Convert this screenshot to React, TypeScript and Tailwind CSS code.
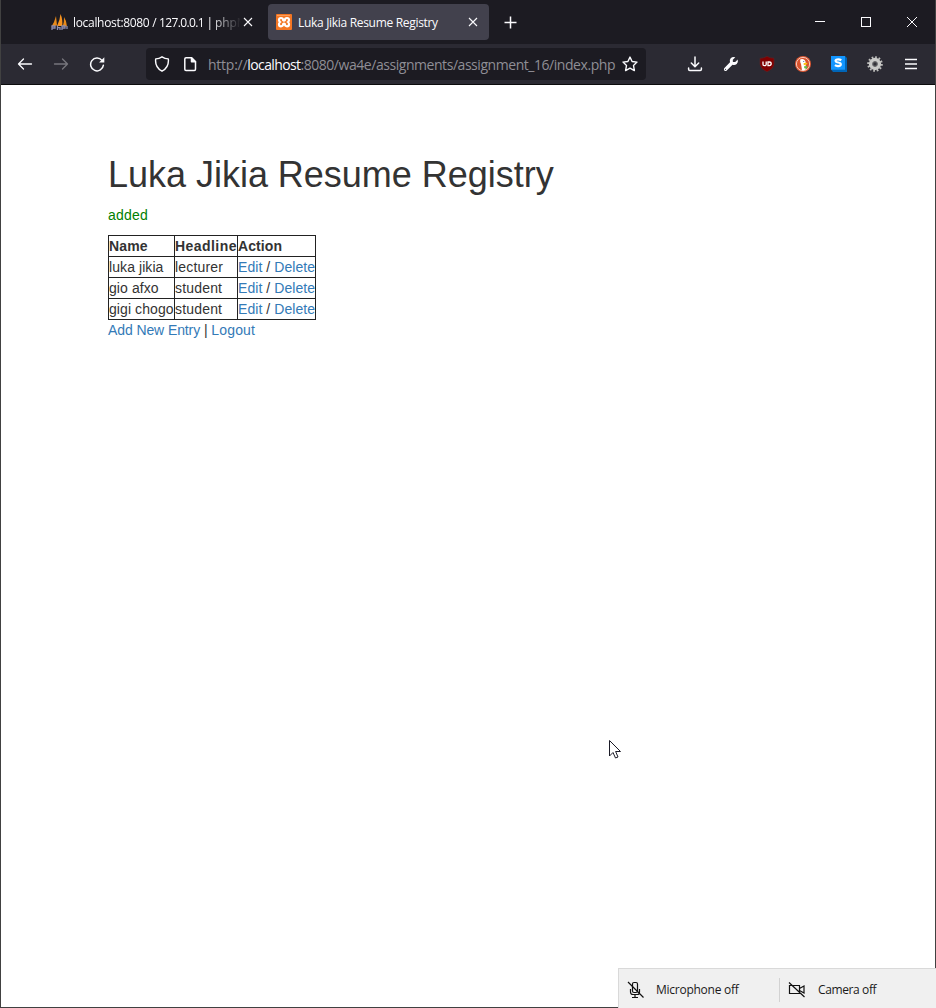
import React from "react";

const UI = "font-['Open_Sans','Noto_Sans',sans-serif]";

function Tab1Icon() {
  return (
    <svg width="18" height="18" viewBox="0 0 18 18" className="-ml-px mr-px shrink-0">
      <path d="M6 3 L7 12.500 L1.500 13.500 Q4.500 9 6 3Z" fill="#e88a1a" />
      <path d="M10.500 1 Q12.800 6 12.300 13 L7 13 Q10 7 10.500 1Z" fill="#f79420" />
      <path d="M14 4 Q16.800 8 17 13.500 L12.700 13.500 Q14.300 9 14 4Z" fill="#e88a1a" />
      <path d="M2 17V13H5V15H2M7.500 12.500V17M7.500 14.700H10V17M12 17V13H15V15H12M17 13V16" fill="none" stroke="#8a8cb0" strokeWidth="1.300" />
    </svg>
  );
}

function XamppIcon() {
  return (
    <svg width="16" height="16" viewBox="0 0 16 16" className="shrink-0">
      <rect width="16" height="16" rx="1" fill="#f37623" />
      <path d="M1 1.500H14" stroke="#ffa768" strokeWidth="0.800" />
      <path d="M5 4Q7 4 7.200 6.300Q8 7.200 8.800 6.300Q9 4 11 4Q13 4 13 6Q13 7.200 12 8Q13 8.800 13 10.200Q13 12.300 11 12.300Q9 12.300 8.800 10Q8 9 7.200 10Q7 12.300 5 12.300Q3 12.300 3 10.200Q3 8.800 4 8Q3 7.200 3 6Q3 4 5 4Z" fill="none" stroke="#fff" strokeWidth="2.200" />
    </svg>
  );
}

function Cross({ size, className }: { size: number; className?: string }) {
  return (
    <svg width={size} height={size} viewBox="0 0 10 10" className={className} fill="none" stroke="currentColor">
      <path d="M1 1L9 9M9 1L1 9" strokeWidth="1.100" />
    </svg>
  );
}

function Line({ d, className, width = "1.500" }: { d: string; className?: string; width?: string }) {
  return (
    <svg width="16" height="16" viewBox="0 0 16 16" className={className} fill="none" stroke="currentColor" strokeWidth={width} strokeLinecap="round" strokeLinejoin="round">
      <path d={d} />
    </svg>
  );
}

function TabStrip() {
  return (
    <div className="flex h-[44px] bg-[#1c1b22] pt-1">
      <div className="flex h-9 w-[217px] ml-[42px] items-center pl-2 pr-[7px]">
        <Tab1Icon />
        <div className="ml-1 mt-[2px] w-[169px] shrink-0 whitespace-nowrap text-[12px] tracking-[-0.32px] [mask-image:linear-gradient(to_right,black_138px,transparent_168px)]">
          localhost:8080 / <span className="tracking-[-0.62px]">127.0.0.1 </span><span className="tracking-[-0.7px]">| </span><span className="tracking-[-0.1px]">phpM</span>
        </div>
        <Cross size={10} className="ml-px shrink-0" />
      </div>
      <div className="ml-[8px] flex h-9 w-[221px] items-center rounded bg-[#42414d] pl-2 pr-[11px]">
        <XamppIcon />
        <span className="ml-1.5 mt-[2px] grow whitespace-nowrap text-[12px] tracking-[-0.31px]">Luka Jikia Resume Registry</span>
        <Cross size={10} />
      </div>
      <div className="ml-[15px] flex h-9 items-center">
        <svg width="13" height="13" viewBox="0 0 13 13" stroke="currentColor" strokeWidth="1.500" fill="none">
          <path d="M6.500 .5V12.500M.5 6.500H12.500" />
        </svg>
      </div>
      <div className="ml-auto flex h-9 items-center gap-[34px] pr-[17px]">
        <svg width="12" height="12" viewBox="0 0 12 12" stroke="currentColor" fill="none"><path d="M1 5.500H11" /></svg>
        <svg width="12" height="12" viewBox="0 0 12 12" stroke="currentColor" fill="none"><rect x="1.500" y="1.500" width="9" height="9" /></svg>
        <svg width="12" height="12" viewBox="0 0 12 12" stroke="currentColor" fill="none"><path d="M1 1L11 11M11 1L1 11" /></svg>
      </div>
    </div>
  );
}

function Extensions() {
  return (
    <div className="ml-auto flex items-center gap-5 pr-4">
      <Line d="M8 1V10.500M4.300 7L8 10.700L11.700 7M1.600 12V13.200Q1.600 14.400 2.800 14.400H13.200Q14.400 14.400 14.400 13.200V12" />
      <svg width="16" height="16" viewBox="0 0 16 16" fill="currentColor">
        <path d="M14.700 3.500L12.200 6L9.900 5.900L9.800 3.700L12.300 1.300Q9.700 .2 7.700 2.200Q6.300 3.700 7 6.200L1.200 12.300Q.5 13.400 1.300 14.500Q2.400 15.400 3.500 14.700L9.500 8.700Q12 9.500 13.700 7.900Q15.500 6.100 14.700 3.500ZM2.600 14Q1.700 13.700 2 13Q2.800 12.500 3 13.400Q3 13.900 2.600 14Z" />
      </svg>
      <svg width="16" height="16" viewBox="0 0 16 16">
        <path d="M8 .3Q11 2.200 15 2.200V8.500Q14.500 13 8 15.800Q1.500 13 1 8.500V2.200Q5 2.200 8 .3Z" fill="#800000" stroke="#5d2529" strokeWidth=".6" />
        <path d="M4 5.500V8.200Q4 9.700 5.500 9.700Q7.200 9.700 7.200 8.200V5.500M9 9.600V6H10.200Q12.200 6 12.200 7.800Q12.200 9.600 10.200 9.600Z" fill="none" stroke="#fff" strokeWidth="1.300" />
      </svg>
      <svg width="16" height="16" viewBox="0 0 16 16">
        <circle cx="8" cy="8" r="8" fill="#de5833" />
        <circle cx="8" cy="8" r="6.600" fill="#d9532d" stroke="#f6d5cb" strokeWidth=".9" />
        <path d="M5.200 3.400Q7.500 2.200 9.800 4.200Q11.200 5.800 10.600 8L10.800 13.600Q9 14.600 7 14L6 8Q4.800 5.500 5.200 3.400Z" fill="#fff" />
        <path d="M8.600 7.200Q10.300 6.400 12.600 7.100Q12.200 8.900 8.800 9.200Z" fill="#fdc20a" />
        <path d="M9 10.300L12.400 10L11.800 12.800L9.300 12.300Z" fill="#65bc46" />
        <circle cx="8.700" cy="5.500" r=".6" fill="#456b9c" />
      </svg>
      <svg width="16" height="16" viewBox="0 0 16 16">
        <path d="M14 0L16 2V16H2L0 13.500Z" fill="#0065b7" />
        <rect width="14" height="13.700" fill="#1396ff" />
        <path d="M10.300 4.300Q8.500 3.200 6.200 3.500Q4.400 3.800 4.600 5.100Q4.800 6.200 7.200 6.500Q9.900 6.900 9.800 8.400Q9.600 10.300 6.900 10.200Q5.200 10.100 3.900 9.200" fill="none" stroke="#fff" strokeWidth="2.200" />
      </svg>
      <svg width="16" height="16" viewBox="0 0 16 16">
        <circle cx="8" cy="8" r="6.700" fill="none" stroke="#bdbdbb" strokeWidth="2.200" strokeDasharray="1.750 1.750" />
        <circle cx="8" cy="8" r="4.400" fill="#48484c" stroke="#cacac8" strokeWidth="3.500" />
        <circle cx="8" cy="8" r="2.200" fill="#333238" stroke="#77777a" strokeWidth=".8" />
      </svg>
      <svg width="14" height="16" viewBox="0 0 14 16" className="mx-px" stroke="currentColor" strokeWidth="1.300">
        <path d="M1 3.500H13M1 8H13M1 12.500H13" />
      </svg>
    </div>
  );
}

function Toolbar() {
  return (
    <div className="flex h-10 items-center bg-[#2b2a33] pl-4">
      <Line d="M14.500 8H1.500M6.500 3L1.500 8L6.500 13" width="1.300" />
      <Line d="M1.500 8H14.500M9.500 3L14.500 8L9.500 13" className="ml-5 text-[#77767d]" width="1.300" />
      <svg width="16" height="16" viewBox="0 0 16 16" className="ml-5" fill="none" stroke="currentColor" strokeWidth="1.500" strokeLinecap="round">
        <path d="M14.400 9.200A6.400 6.400 0 1 1 13 4.400" />
        <path d="M15.300 1.300V6.500H10.100Z" fill="currentColor" stroke="none" />
      </svg>
      <div className="ml-[41px] flex h-8 w-[500px] items-center rounded bg-[#1c1b22] pl-2">
        <Line d="M8 .8Q10.800 2.700 14.300 2.900Q15.300 11.300 8 15.200Q.7 11.300 1.700 2.900Q5.200 2.700 8 .8Z" width="1.400" />
        <svg width="16" height="16" viewBox="0 0 16 16" className="ml-3" fill="none" stroke="currentColor" strokeWidth="1.500" strokeLinejoin="round">
          <path d="M9.500 1.800H4Q2.800 1.800 2.800 3V13.300Q2.800 14.500 4 14.500H12.300Q13.500 14.500 13.500 13.300V5.700Z" />
          <path d="M9.500 1.800V5.700H13.500Z" fill="currentColor" />
        </svg>
        <span className="ml-[10px] mt-px w-[408px] shrink-0 whitespace-nowrap text-[14px] tracking-[-0.45px] text-[#8f8e95]">
          <span className="tracking-[-0.25px]">http://</span>
          <span className="tracking-[-0.62px] text-[#fbfbfe]">localhost</span>:8080/wa4e/assignments/assignment_16/index.php
        </span>
        <Line className="ml-[6px] shrink-0" width="1.400" d="M8 1.100L10.100 5.500L15 6.100L11.500 9.500L12.400 14.600L8 12.200L3.600 14.600L4.500 9.500L1 6.100L5.900 5.500Z" />
      </div>
      <Extensions />
    </div>
  );
}

const rows = [
  ["luka jikia", "lecturer"],
  ["gio afxo", "student"],
  ["gigi chogo", "student"],
];

const cell = "border border-[#222] p-0 h-[21px] whitespace-nowrap";

function Registry() {
  return (
    <main className="grow bg-white pl-[107px] pt-[70px] font-['Liberation_Sans',Arial,sans-serif] text-[14px] leading-5 text-[#333]">
      <h1 className="text-[36px] font-normal leading-10 tracking-[-0.02px]">Luka Jikia Resume Registry</h1>
      <p className="mt-[10px] tracking-[0.2px] text-[green]">added</p>
      <table className="mt-[10px] w-[208px] table-fixed border-collapse text-left">
        <colgroup>
          <col className="w-[66px]" />
          <col className="w-[63px]" />
          <col className="w-[78px]" />
        </colgroup>
        <thead>
          <tr>
            <th className={cell}><span className="tracking-[0.15px]">Name</span></th>
            <th className={cell}><span className="tracking-[0.45px]">Headline</span></th>
            <th className={cell}><span className="tracking-[0.1px]">Action</span></th>
          </tr>
        </thead>
        <tbody>
          {rows.map(([name, headline]) => (
            <tr key={name}>
              <td className={cell}><span className="tracking-[0.08px]">{name}</span></td>
              <td className={cell}><span className="tracking-[0.18px]">{headline}</span></td>
              <td className={cell}>
                <span className="tracking-[0.06px]">
                  <a className="text-[#337ab7]">Edit</a> / <a className="text-[#337ab7]">Delete</a>
                </span>
              </td>
            </tr>
          ))}
        </tbody>
      </table>
      <p className="tracking-[-0.06px]">
        <a className="tracking-[-0.1px] text-[#337ab7]">Add New Entry</a> | <a className="tracking-[0.15px] text-[#337ab7]">Logout</a>
      </p>
    </main>
  );
}

function DeviceStatus() {
  return (
    <div className={`absolute bottom-0 right-0 flex h-10 w-[318px] items-center border-l border-t border-[#d9d9d9] bg-[#f0f0f0] pt-1 text-[12px] text-[#1a1a1a] ${UI}`}>
      <svg width="18" height="18" viewBox="0 0 18 18" className="-mt-px ml-[8px]" fill="none" stroke="#111" strokeWidth="1.200">
        <rect x="5.500" y="1.500" width="5" height="10" rx="1.500" />
        <path d="M3.500 8V11Q3.500 13.500 6 13.500H10.500Q12.500 13.500 12.500 11V8M8 13.500V16.500M5 16.500H11M1 1L16.500 16.500" />
      </svg>
      <span className="-mt-px ml-[11px] w-[123px] whitespace-nowrap tracking-[-0.26px]">Microphone off</span>
      <div className="-mt-px h-6 w-px bg-[#d2d2d2]" />
      <svg width="18" height="18" viewBox="0 0 18 18" className="-mt-px ml-2" fill="none" stroke="#111" strokeWidth="1.200">
        <path d="M1.500 4.500H11.500V12.500H1.500ZM11.500 7.500L16 5V12L11.500 9.500M1 1.500L16.500 16" />
      </svg>
      <span className="-mt-px ml-3 whitespace-nowrap tracking-[-0.38px]">Camera off</span>
    </div>
  );
}

export default function App() {
  return (
    <div className="relative h-[1008px] w-[936px] overflow-hidden">
      <div className="flex h-full flex-col border-x border-b border-[#414141]">
        <header className={`border-b border-[#0c0c0d] text-[#fbfbfe] ${UI}`}>
          <TabStrip />
          <Toolbar />
        </header>
        <Registry />
      </div>
      <DeviceStatus />
      <svg width="14" height="21" viewBox="0 0 14 21" className="absolute left-[608px] top-[739px]">
        <path d="M1.500 1.500V17L5 13.500L7.500 19L10 18L7.600 12.500H12.500Z" fill="#fff" stroke="#1b1b27" strokeWidth="1" />
      </svg>
    </div>
  );
}
